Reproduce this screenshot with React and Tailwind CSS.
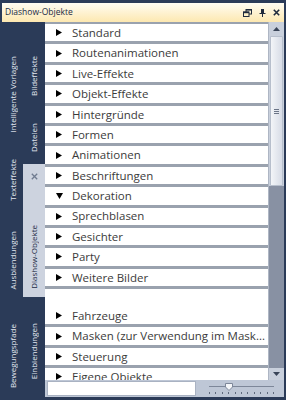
import React from 'react';

const items = [
  'Standard',
  'Routenanimationen',
  'Live-Effekte',
  'Objekt-Effekte',
  'Hintergründe',
  'Formen',
  'Animationen',
  'Beschriftungen',
  'Dekoration',
  'Sprechblasen',
  'Gesichter',
  'Party',
  'Weitere Bilder',
];

const after = ['Masken (zur Verwendung im Mask...', 'Steuerung', 'Eigene Objekte'];

function Arrow({ open }) {
  return (
    <span className="w-[27px] shrink-0 flex justify-center pl-[1px]">
      {open ? (
        <svg width="7" height="6" viewBox="0 0 7 6"><path d="M0 0H7L3.5 6Z" fill="#000" /></svg>
      ) : (
        <svg width="6" height="7" viewBox="0 0 6 7"><path d="M0 0L6 3.5L0 7Z" fill="#000" /></svg>
      )}
    </span>
  );
}

function Row({ label }) {
  return (
    <div className="h-[17.4px] shrink-0 bg-white flex items-center text-[11.5px] text-[#3b3b3b] leading-none whitespace-nowrap overflow-hidden">
      <Arrow open={label === 'Dekoration'} />
      <span>{label}</span>
    </div>
  );
}

function VTab({ label, h, dark }) {
  return (
    <div className={`shrink-0 flex items-center justify-center ${h}`}>
      <span className={`[writing-mode:vertical-rl] rotate-180 text-[8px] leading-none whitespace-nowrap ${dark ? 'text-[#1c2a44]' : 'text-[#e3e8f0]'}`}>
        {label}
      </span>
    </div>
  );
}

export default function App() {
  return (
    <div className="w-[286px] h-[400px] bg-[#2b3b58] px-[2px] pt-[3px] pb-[3px] flex flex-col" style={{ fontFamily: '"Open Sans", "Noto Sans", sans-serif' }}>
      {/* title bar */}
      <div className="h-[19px] shrink-0 bg-gradient-to-b from-[#fffcf2] to-[#fde8b0] flex items-center pl-[3px] pr-[4px]">
        <span className="text-[8.5px] text-[#1b2a44] flex-1">Diashow-Objekte</span>
        <div className="flex items-center gap-[7px]">
          <svg width="9" height="8" viewBox="0 0 9 8">
            <rect x="3" y="0.5" width="5.5" height="4.5" fill="none" stroke="#1f2a3c" strokeWidth="1" />
            <rect x="3" y="0" width="6" height="1.6" fill="#1f2a3c" />
            <rect x="0.5" y="3" width="5.5" height="4.5" fill="#fdf0c8" stroke="#1f2a3c" strokeWidth="1" />
            <rect x="0" y="2.6" width="6" height="1.6" fill="#1f2a3c" />
          </svg>
          <svg width="7" height="8" viewBox="0 0 7 8">
            <rect x="2" y="0" width="3" height="4" fill="#1f2a3c" />
            <rect x="0.5" y="4" width="6" height="1" fill="#1f2a3c" />
            <rect x="3" y="5" width="1" height="3" fill="#1f2a3c" />
          </svg>
          <svg width="7" height="7" viewBox="0 0 7 7">
            <path d="M0.8 0.8L6.2 6.2M6.2 0.8L0.8 6.2" stroke="#1f2a3c" strokeWidth="1.6" />
          </svg>
        </div>
      </div>

      <div className="flex-1 flex min-h-0">
        {/* vertical tabs */}
        <div className="w-[43px] shrink-0 flex overflow-hidden">
          <div className="w-[21px] flex flex-col pt-[28px]">
            <VTab label="Intelligente Vorlagen" h="h-[88px]" />
            <VTab label="Texteffekte" h="h-[84px]" />
            <VTab label="Ausblendungen" h="h-[76px]" />
            <VTab label="Bewegungspfade" h="h-[116px]" />
          </div>
          <div className="w-[22px] flex flex-col pt-[18px]">
            <VTab label="Bildeffekte" h="h-[72px]" />
            <VTab label="Dateien" h="h-[52px]" />
            <div className="h-[133px] shrink-0 bg-[#cdd3df] flex flex-col items-center">
              <svg className="mt-[9px]" width="7" height="7" viewBox="0 0 7 7">
                <path d="M0.8 0.8L6.2 6.2M6.2 0.8L0.8 6.2" stroke="#6f7b90" strokeWidth="1.3" />
              </svg>
              <div className="flex-1 flex items-center justify-center pt-[36px]">
                <span className="[writing-mode:vertical-rl] rotate-180 text-[8px] leading-none whitespace-nowrap text-[#1c2a44]">Diashow-Objekte</span>
              </div>
            </div>
            <VTab label="Einblendungen" h="h-[108px]" />
          </div>
        </div>

        {/* list + bottom bar */}
        <div className="w-[239px] shrink-0 flex flex-col">
          <div className="flex-1 flex min-h-0 bg-[#9aa2ae]">
            <div className="flex-1 min-w-0 flex flex-col gap-[3px] pt-[2px] overflow-hidden">
              {items.map((l) => (
                <Row key={l} label={l} />
              ))}
              <div className="shrink-0 bg-white">
                <div className="h-[18px]" />
                <Row label="Fahrzeuge" />
              </div>
              {after.map((l) => (
                <Row key={l} label={l} />
              ))}
            </div>
            {/* scrollbar */}
            <div className="w-[16px] shrink-0 bg-[#c9d0dc] border-l border-[#aeb6c4] flex flex-col">
              <div className="h-[14px] shrink-0 flex items-center justify-center">
                <svg width="7" height="4" viewBox="0 0 7 4"><path d="M0 4H7L3.5 0Z" fill="#3a4558" /></svg>
              </div>
              <div className="h-[150px] shrink-0 mx-[1px] rounded-[1px] bg-gradient-to-r from-[#f3f5f8] to-[#d7dce6] border border-[#b7bfcc] flex items-center justify-center">
                <div className="flex flex-col gap-[1px]">
                  <div className="w-[5px] h-[1px] bg-[#6b7587]" />
                  <div className="w-[5px] h-[1px] bg-[#6b7587]" />
                  <div className="w-[5px] h-[1px] bg-[#6b7587]" />
                </div>
              </div>
              <div className="flex-1 bg-[#8891a3]" />
              <div className="h-[12px] shrink-0 flex items-center justify-center">
                <svg width="7" height="4" viewBox="0 0 7 4"><path d="M0 0H7L3.5 4Z" fill="#3a4558" /></svg>
              </div>
            </div>
          </div>
          {/* bottom bar */}
          <div className="h-[17px] shrink-0 bg-[#bec7d6] flex items-center">
            <div className="w-[149px] shrink-0 h-[15px] ml-[2px] bg-white border border-[#a9b2c2]" />
            <div className="w-[88px] shrink-0 h-full pl-[13px] pr-[10px] flex flex-col justify-center gap-[1px]">
              <div className="relative h-[8px]">
                <div className="absolute left-0 right-0 top-[3px] h-[1px] bg-[#7d8799]" />
                <svg className="absolute left-[16px] top-0" width="8" height="8" viewBox="0 0 8 8">
                  <path d="M0.5 0.5H7.5V4L4 7.5L0.5 4Z" fill="#f4f6f9" stroke="#7d8799" />
                </svg>
              </div>
              <div className="flex justify-between">
                {Array.from({ length: 11 }).map((_, i) => (
                  <div key={i} className="w-[1px] h-[2px] bg-[#5f6a7d]" />
                ))}
              </div>
            </div>
          </div>
        </div>
      </div>
    </div>
  );
}
